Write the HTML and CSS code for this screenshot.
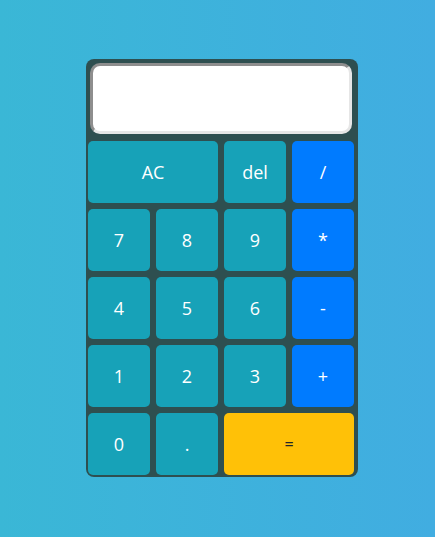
FILE: index.html
```html
<!DOCTYPE html>
<html>
<head>
<meta charset="utf-8">
<link rel="stylesheet" href="styles.css">
</head>
<body>
<div class="calc">
  <div class="display"></div>
  <div class="keys">
    <button class="key span2">AC</button>
    <button class="key">del</button>
    <button class="key op">/</button>
    <button class="key">7</button>
    <button class="key">8</button>
    <button class="key">9</button>
    <button class="key op">*</button>
    <button class="key">4</button>
    <button class="key">5</button>
    <button class="key">6</button>
    <button class="key op">-</button>
    <button class="key">1</button>
    <button class="key">2</button>
    <button class="key">3</button>
    <button class="key op">+</button>
    <button class="key">0</button>
    <button class="key">.</button>
    <button class="key span2 eq">=</button>
  </div>
</div>
</body>
</html>
```
FILE: styles.css
```css
html, body {
  margin: 0;
  height: 100%;
}
body {
  background: linear-gradient(to right, #3ab7d6, #41ade1);
  font-family: "Open Sans", "Noto Sans", sans-serif;
}
.calc {
  position: relative;
  top: 59px;
  margin-left: 86px;
  width: 272px;
  height: 418px;
  box-sizing: border-box;
  background: #2e4f50;
  border-radius: 8px;
  padding: 4px 4px 2px 2px;
}
.display {
  margin-left: 2px;
  width: 262px;
  height: 71px;
  box-sizing: border-box;
  background: #fff;
  border-radius: 10px;
  border: 3px solid;
  border-color: #8e8e8e #e6e6e6 #e6e6e6 #8e8e8e;
}
.keys {
  margin-top: 7px;
  display: grid;
  grid-template-columns: repeat(4, 62px);
  grid-auto-rows: 62px;
  gap: 6px;
}
.key {
  border: none;
  border-radius: 5px;
  background: #17a2b8;
  color: #fff;
  font-family: "Open Sans", "Noto Sans", sans-serif;
  font-size: 18px;
  padding: 0;
}
.span2 {
  grid-column: span 2;
}
.op {
  background: #007bff;
}
.eq {
  background: #ffc107;
  color: #212529;
  font-size: 16px;
}
```
